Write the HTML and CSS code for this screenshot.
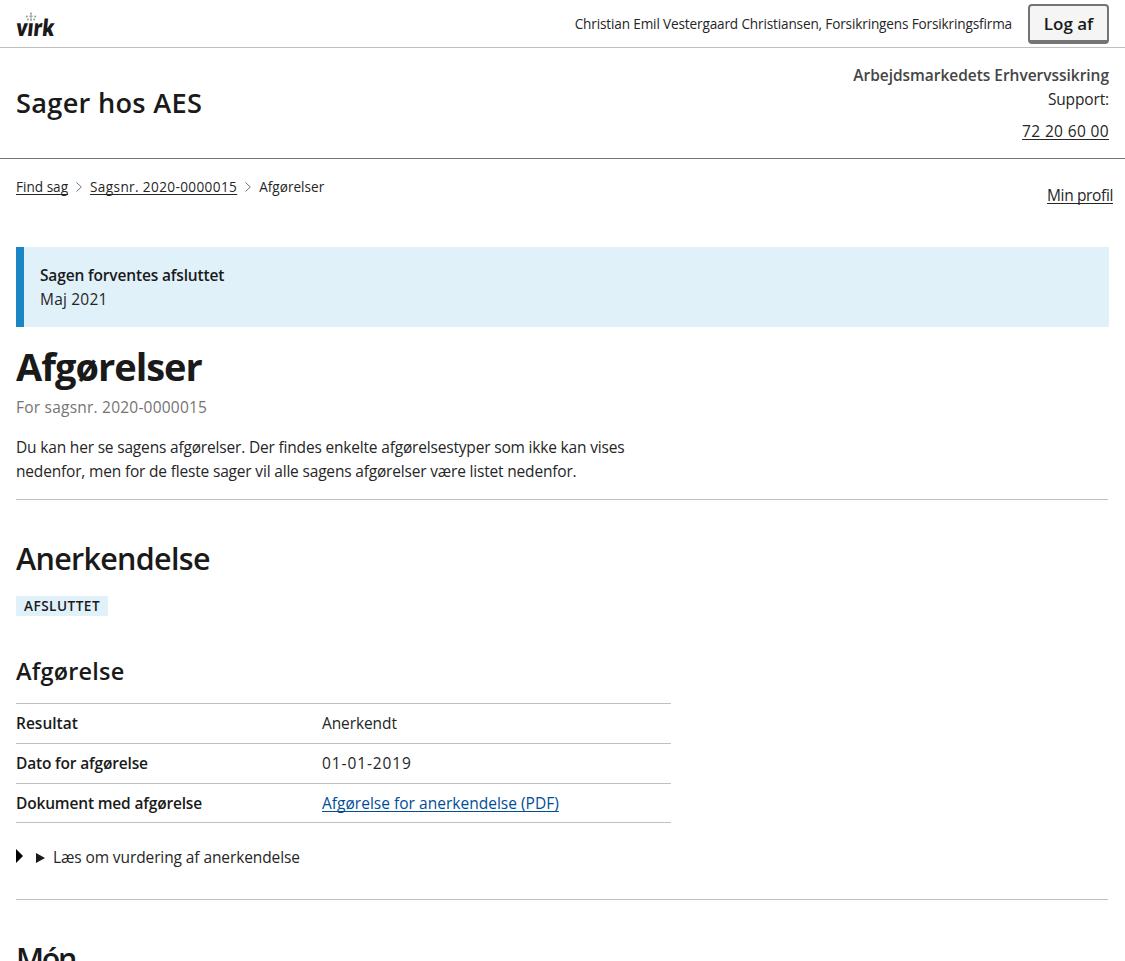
FILE: index.html
```
<!DOCTYPE html>
<html lang="da">
<head>
<meta charset="utf-8">
<title>Afgørelser – Sager hos AES</title>
<link rel="stylesheet" href="styles.css">
</head>
<body>
<header>
  <div class="portal">
    <svg class="logo" width="40" height="30" viewBox="0 0 40 30" role="img" aria-label="virk">
      <g class="crown">
        <circle cx="10.8" cy="7.5" r="1"/><circle cx="15" cy="4.4" r="1"/><circle cx="19.2" cy="7.5" r="1"/>
        <circle cx="11.8" cy="10.4" r="1"/><circle cx="15" cy="10.9" r="1"/><circle cx="18.2" cy="10.4" r="1"/>
        <rect x="14.5" y="5.4" width="1" height="5"/><rect x="13.2" y="6.7" width="3.6" height="1"/>
      </g>
      <text class="wordmark" x="0" y="0" textLength="38" lengthAdjust="spacingAndGlyphs" transform="translate(-.4 26.6) skewX(-6)">vırk</text>
    </svg>
    <span class="user">Christian Emil Vestergaard Christiansen, Forsikringens Forsikringsfirma</span>
    <button class="logout">Log af</button>
  </div>
  <div class="solution">
    <span class="solution-title">Sager hos AES</span>
    <div class="authority">
      <strong>Arbejdsmarkedets Erhvervssikring</strong>
      <span class="support">Support:</span>
      <a class="phone" href="#">72 20 60 00</a>
    </div>
  </div>
</header>
<main class="container">
  <div class="nav-row">
    <nav class="breadcrumb">
      <a class="crumb-find" href="#">Find sag</a>
      <svg class="chevron" width="6" height="10" viewBox="0 0 6 10"><path d="M.5.5 5.3 5 .5 9.5"/></svg>
      <a class="crumb-case" href="#">Sagsnr. 2020-0000015</a>
      <svg class="chevron" width="6" height="10" viewBox="0 0 6 10"><path d="M.5.5 5.3 5 .5 9.5"/></svg>
      <span>Afgørelser</span>
    </nav>
    <a class="profile" href="#">Min profil</a>
  </div>
  <div class="alert">
    <strong class="alert-title">Sagen forventes afsluttet</strong>
    <span class="alert-date">Maj 2021</span>
  </div>
  <h1>Afgørelser</h1>
  <p class="subheading">For sagsnr. 2020-0000015</p>
  <p class="intro">Du kan her se sagens afgørelser. Der findes enkelte afgørelsestyper som ikke kan vises<br>nedenfor, men for de fleste sager vil alle sagens afgørelser være listet nedenfor.</p>
  <section class="decision">
    <h2>Anerkendelse</h2>
    <span class="badge">AFSLUTTET</span>
    <h3>Afgørelse</h3>
    <dl class="facts">
      <dt>Resultat</dt><dd class="fact-result">Anerkendt</dd>
      <dt>Dato for afgørelse</dt><dd class="fact-date">01-01-2019</dd>
      <dt>Dokument med afgørelse</dt><dd><a class="document" href="#">Afgørelse for anerkendelse (PDF)</a></dd>
    </dl>
    <div class="details">
      <svg class="marker" width="7" height="14" viewBox="0 0 7 14"><path d="M0 0 7 7 0 14z"/></svg>
      <svg class="marker-small" width="9" height="10" viewBox="0 0 9 10"><path d="M0 0 9 5 0 10z"/></svg>
      <span class="summary">Læs om vurdering af anerkendelse</span>
    </div>
  </section>
  <section class="decision">
    <h2 class="mon">Món</h2>
  </section>
</main>
</body>
</html>
```
FILE: styles.css
```
* { box-sizing: border-box; }
html { overflow: hidden; }
body {
  margin: 0;
  height: 961px;
  overflow: hidden;
  background: #fff;
  color: #262626;
  font: 400 15.5px/24px "Open Sans", "Noto Sans", sans-serif;
}
a { color: inherit; text-underline-offset: 2px; text-decoration-thickness: 1px; text-decoration-skip-ink: none; }
h1, h2, h3, p, dl, dd { margin: 0; }
h1, h2, h3, dt, strong, .solution-title, .badge { color: #1a1a1a; }
h2, h3, dt, strong { font-weight: 600; }

.portal {
  display: flex;
  align-items: center;
  height: 48px;
  padding: 0 16px;
  border-bottom: 1px solid #bfbfbf;
}
.logo { overflow: visible; }
.crown { fill: #999; }
.wordmark { font: 800 23px "Open Sans", sans-serif; fill: #1a1a1a; }
.user { margin-left: auto; font-size: 13.6px; letter-spacing: -0.15px; white-space: nowrap; }
.logout {
  width: 81px;
  height: 40px;
  margin-left: 16px;
  padding: 1px 0 0;
  border: 2px solid #747474;
  border-bottom-width: 4px;
  border-radius: 4px;
  background: #f5f5f5;
  color: #1a1a1a;
  font: 600 17px/34px "Open Sans", sans-serif;
}

.solution {
  display: flex;
  justify-content: space-between;
  height: 111px;
  padding: 15px 16px 0;
  border-bottom: 1px solid #747474;
}
.solution-title { font-size: 27.2px; font-weight: 600; line-height: 80px; letter-spacing: 0.28px; }
.authority { display: flex; flex-direction: column; align-items: flex-end; }
.authority strong { color: #454545; letter-spacing: -0.03px; }
.support { letter-spacing: -0.14px; }
.phone { margin-top: 8px; letter-spacing: 0.36px; }

.container { padding: 0 16px; }
.nav-row { display: flex; justify-content: space-between; height: 88px; padding-top: 16px; }
.breadcrumb { display: flex; align-items: center; height: 24px; font-size: 13.6px; }
.crumb-case { letter-spacing: 0.37px; }
.chevron { margin: 0 8px; fill: none; stroke: #747474; stroke-width: 1; }
.profile { height: 24px; margin: 8px -4px 0 0; letter-spacing: -0.36px; }

.alert {
  display: flex;
  flex-direction: column;
  height: 80px;
  padding: 16px;
  border-left: 8px solid #1b86c3;
  background: #e0f1fa;
}
.alert-title { letter-spacing: -0.15px; }
.alert-date { letter-spacing: 0.2px; }

h1 { margin-top: 15px; font-size: 38px; font-weight: 700; line-height: 48px; letter-spacing: -1px; }
.subheading { margin-top: 5px; color: #747474; letter-spacing: 0.22px; }
.intro { margin: 16px 1px 0 0; padding-bottom: 16px; letter-spacing: -0.18px; border-bottom: 1px solid #bfbfbf; white-space: nowrap; }

.decision { margin-right: 1px; border-bottom: 1px solid #bfbfbf; }
.decision h2 { padding: 38px 0 2px; font-size: 30.5px; line-height: 40px; letter-spacing: -0.7px; }
.decision .mon { letter-spacing: -2.4px; }
.badge {
  display: block;
  width: 92px;
  height: 20px;
  margin-top: 16px;
  padding-left: 8px;
  background: #e0f1fa;
  font-size: 13.6px;
  font-weight: 600;
  line-height: 20px;
  letter-spacing: 0.47px;
}
h3 { margin-top: 39px; font-size: 23.5px; line-height: 32px; letter-spacing: 0.2px; }
.facts { display: grid; grid-template-columns: 306px 349px; width: 655px; margin-top: 16px; border-bottom: 1px solid #bfbfbf; }
.facts dt, .facts dd { height: 40px; padding-top: 7px; border-top: 1px solid #bfbfbf; letter-spacing: -0.17px; }
.facts dt:first-of-type { letter-spacing: 0; }
.facts .fact-result { letter-spacing: -0.1px; }
.facts .fact-date { letter-spacing: 0.9px; }
.facts .document { color: #004d99; letter-spacing: 0.02px; }
.facts dt:nth-of-type(3), .facts dd:nth-of-type(3) { height: 39px; }
.details { display: flex; align-items: center; height: 76px; padding-bottom: 7px; letter-spacing: -0.1px; }
.summary { padding-bottom: 2px; }
.marker { margin: -3px 13px 0 0; fill: #000; }
.marker-small { margin-right: 8px; fill: #1a1a1a; }
```
